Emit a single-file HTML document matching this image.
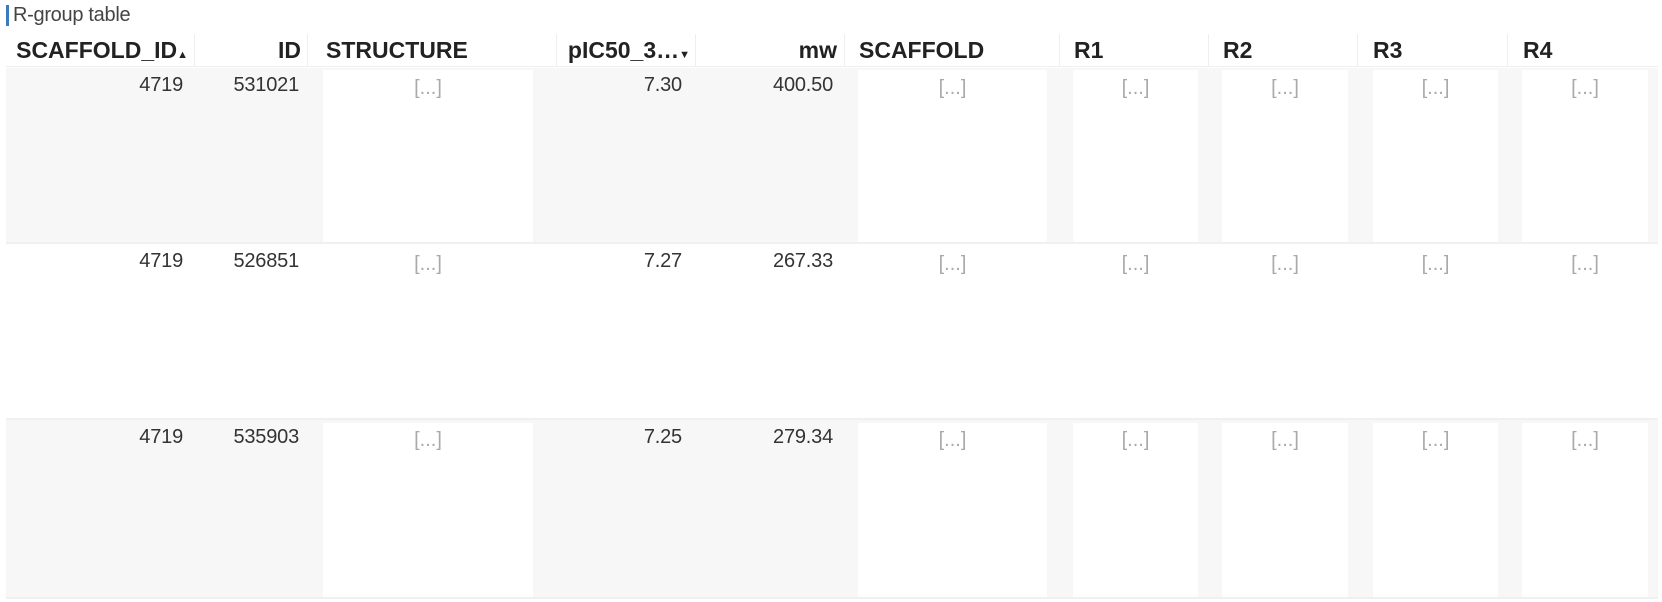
<!DOCTYPE html>
<html><head><style>
body{margin:0;width:1662px;height:602px;background:#fff;font-family:"Liberation Sans",Arial,sans-serif;position:relative;overflow:hidden}
div{position:absolute}
.t{left:6px;top:5px;font-size:20px;color:#444;border-left:3px solid #3a7abf;padding-left:4px;line-height:21px;letter-spacing:-0.3px}
.h{top:34px;height:32px;font-size:23px;font-weight:bold;color:#222;line-height:32px;border-right:1px solid #eee;white-space:nowrap}
.hd{top:66px;left:6px;width:1652px;height:1px;background:#eee}
.row{left:6px;width:1652px;height:174px}
.g{background:#f7f7f7}
.c{font-size:20px;color:#333;text-align:right;line-height:24px;letter-spacing:-0.2px}
.b{background:#fff}
.p{font-size:20px;color:#aaa;text-align:center;line-height:24px}
.sep{left:6px;width:1652px;height:2px;background:#f0f0f0}
</style></head><body>
<div class="t">R-group table</div>
<div class="h" style="left:6px;width:182px;text-align:right;padding-right:6px">SCAFFOLD_ID<span style="font-size:11px">▲</span></div>
<div class="h" style="left:195px;width:106px;text-align:right;padding-right:6px">ID</div>
<div class="h" style="left:308px;width:230px;padding-left:18px">STRUCTURE</div>
<div class="h" style="left:546px;width:144px;text-align:right;padding-right:5px">pIC50_3…<span style="font-size:11px">▼</span></div>
<div class="h" style="left:697px;width:140px;text-align:right;padding-right:7px">mw</div>
<div class="h" style="left:846px;width:200px;padding-left:13px">SCAFFOLD</div>
<div class="h" style="left:1060px;width:134px;padding-left:14px">R1</div>
<div class="h" style="left:1209px;width:134px;padding-left:14px">R2</div>
<div class="h" style="left:1359px;width:134px;padding-left:14px">R3</div>
<div class="h" style="left:1509px;width:134px;padding-left:14px;border-right:none">R4</div>
<div class="hd"></div>

<div class="row g" style="top:68px"></div>
<div class="sep" style="top:242px"></div>
<div class="row" style="top:244px"></div>
<div class="sep" style="top:418px"></div>
<div class="row g" style="top:420px;height:177px"></div>
<div class="sep" style="top:597px"></div>

<div class="b" style="left:323px;top:70px;width:210px;height:172px"></div>
<div class="b" style="left:858px;top:70px;width:189px;height:172px"></div>
<div class="b" style="left:1073px;top:70px;width:125px;height:172px"></div>
<div class="b" style="left:1222px;top:70px;width:126px;height:172px"></div>
<div class="b" style="left:1373px;top:70px;width:125px;height:172px"></div>
<div class="b" style="left:1522px;top:70px;width:126px;height:172px"></div>
<div class="b" style="left:323px;top:423px;width:210px;height:174px"></div>
<div class="b" style="left:858px;top:423px;width:189px;height:174px"></div>
<div class="b" style="left:1073px;top:423px;width:125px;height:174px"></div>
<div class="b" style="left:1222px;top:423px;width:126px;height:174px"></div>
<div class="b" style="left:1373px;top:423px;width:125px;height:174px"></div>
<div class="b" style="left:1522px;top:423px;width:126px;height:174px"></div>

<div class="c" style="left:100px;top:73px;width:83px">4719</div>
<div class="c" style="left:200px;top:73px;width:99px">531021</div>
<div class="c" style="left:560px;top:73px;width:122px">7.30</div>
<div class="c" style="left:710px;top:73px;width:123px">400.50</div>

<div class="c" style="left:100px;top:249px;width:83px">4719</div>
<div class="c" style="left:200px;top:249px;width:99px">526851</div>
<div class="c" style="left:560px;top:249px;width:122px">7.27</div>
<div class="c" style="left:710px;top:249px;width:123px">267.33</div>

<div class="c" style="left:100px;top:425px;width:83px">4719</div>
<div class="c" style="left:200px;top:425px;width:99px">535903</div>
<div class="c" style="left:560px;top:425px;width:122px">7.25</div>
<div class="c" style="left:710px;top:425px;width:123px">279.34</div>

<div class="p" style="left:323px;top:76px;width:210px">[...]</div>
<div class="p" style="left:858px;top:76px;width:189px">[...]</div>
<div class="p" style="left:1073px;top:76px;width:125px">[...]</div>
<div class="p" style="left:1222px;top:76px;width:126px">[...]</div>
<div class="p" style="left:1373px;top:76px;width:125px">[...]</div>
<div class="p" style="left:1522px;top:76px;width:126px">[...]</div>

<div class="p" style="left:323px;top:252px;width:210px">[...]</div>
<div class="p" style="left:858px;top:252px;width:189px">[...]</div>
<div class="p" style="left:1073px;top:252px;width:125px">[...]</div>
<div class="p" style="left:1222px;top:252px;width:126px">[...]</div>
<div class="p" style="left:1373px;top:252px;width:125px">[...]</div>
<div class="p" style="left:1522px;top:252px;width:126px">[...]</div>

<div class="p" style="left:323px;top:428px;width:210px">[...]</div>
<div class="p" style="left:858px;top:428px;width:189px">[...]</div>
<div class="p" style="left:1073px;top:428px;width:125px">[...]</div>
<div class="p" style="left:1222px;top:428px;width:126px">[...]</div>
<div class="p" style="left:1373px;top:428px;width:125px">[...]</div>
<div class="p" style="left:1522px;top:428px;width:126px">[...]</div>
</body></html>
